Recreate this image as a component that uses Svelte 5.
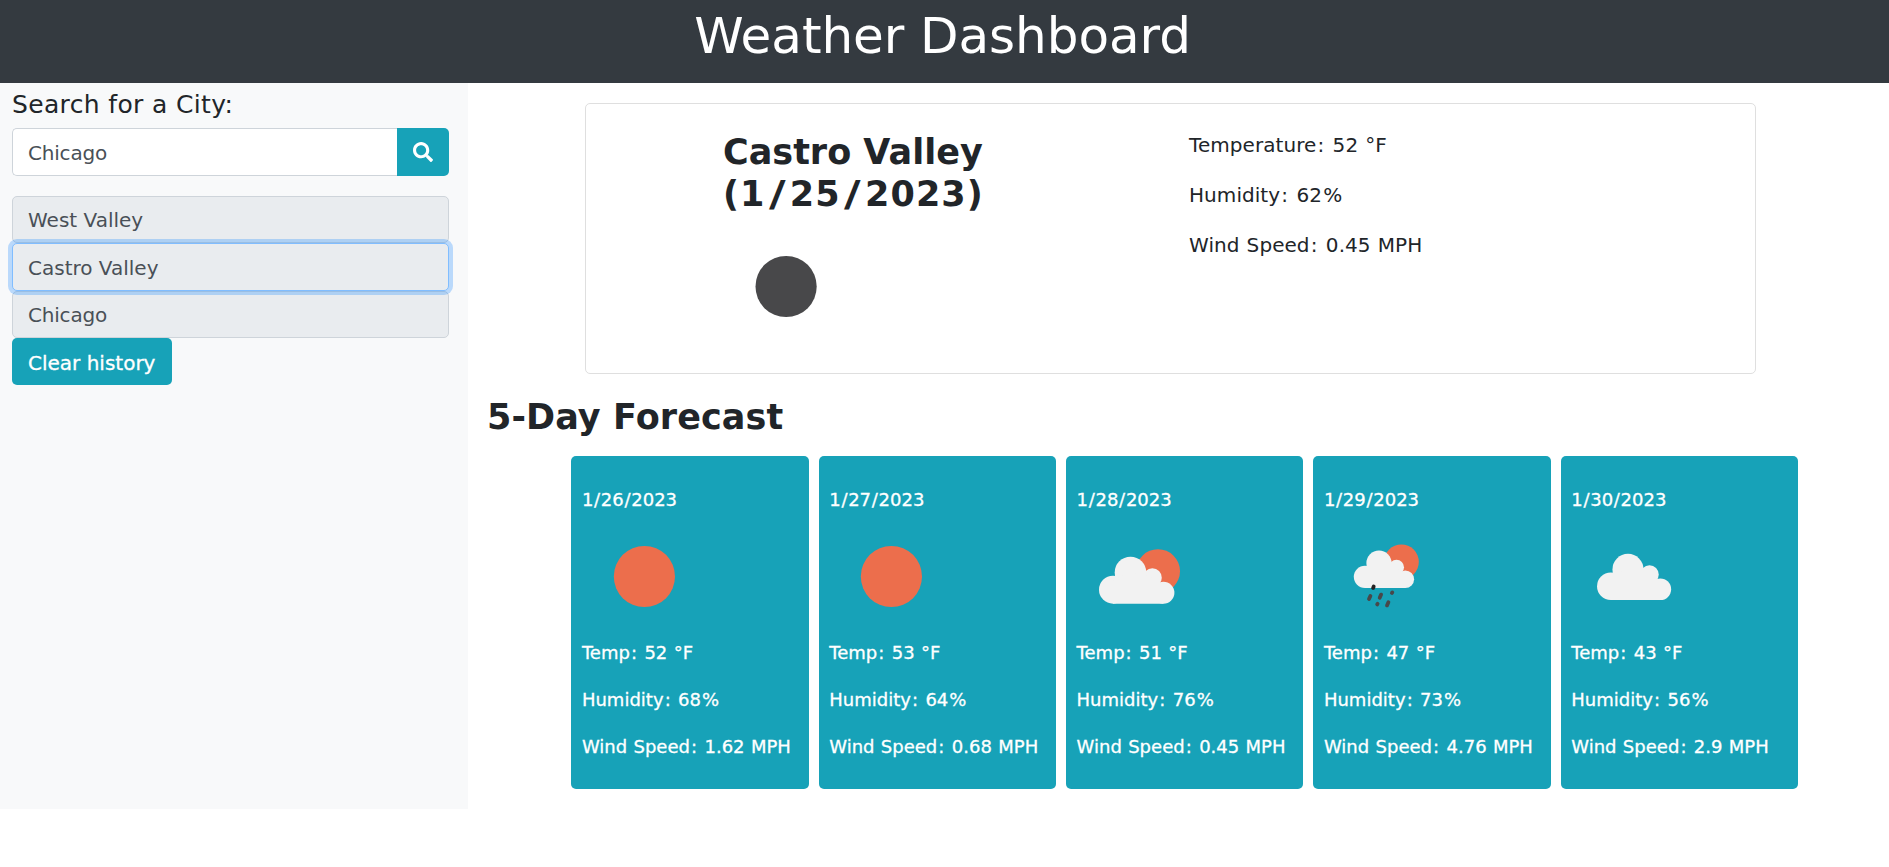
<script>
  const history = ['West Valley', 'Castro Valley', 'Chicago'];
  const selected = 'Castro Valley';
  const forecast = [
    { date: '1/26/2023', icon: 'sun', temp: 52, humidity: 68, wind: '1.62' },
    { date: '1/27/2023', icon: 'sun', temp: 53, humidity: 64, wind: '0.68' },
    { date: '1/28/2023', icon: 'partly', temp: 51, humidity: 76, wind: '0.45' },
    { date: '1/29/2023', icon: 'rain', temp: 47, humidity: 73, wind: '4.76' },
    { date: '1/30/2023', icon: 'cloud', temp: 43, humidity: 56, wind: '2.9' }
  ];
  let city = $state('Chicago');
</script>

{#snippet cloud()}
  <g fill="#f2f2f2" transform="translate(.3 .2)">
    <circle cx="35.7" cy="75.5" r="14" />
    <circle cx="53.2" cy="58.3" r="15.8" />
    <circle cx="75.1" cy="63.5" r="9.4" />
    <circle cx="86.1" cy="78.5" r="11" />
    <path d="M35.7 89.5V66L53 58L75 63L86.1 74V89.5Z" />
  </g>
{/snippet}

{#snippet dated(value)}{#each value.split('/') as part, i}{#if i > 0}<span class="slash">/</span>{/if}{part}{/each}{/snippet}

{#snippet reading(label, value, unit)}
  <p>{label}<span class="colon">:</span> {value}{#if unit === '%'}<span class="percent">%</span>{:else}{' ' + unit}{/if}</p>
{/snippet}

<header><h1>Weather Dashboard</h1></header>
<div class="layout">
  <aside>
    <h5>Search for a City:</h5>
    <div class="search">
      <input type="text" bind:value={city} aria-label="City" />
      <button class="go" aria-label="Search">
        <svg width="20" height="20" viewBox="0 0 512 512"><path fill="#fff" d="M505 442.7L405.3 343c-4.5-4.5-10.6-7-17-7H372c27.6-35.3 44-79.7 44-128C416 93.1 322.9 0 208 0S0 93.1 0 208s93.1 208 208 208c48.3 0 92.7-16.4 128-44v16.3c0 6.4 2.5 12.5 7 17l99.7 99.7c9.4 9.4 24.6 9.4 33.9 0l28.3-28.3c9.4-9.4 9.4-24.6.1-34zM208 336c-70.7 0-128-57.2-128-128 0-70.7 57.2-128 128-128 70.7 0 128 57.2 128 128 0 70.7-57.2 128-128 128z" /></svg>
      </button>
    </div>
    <div class="history">
      {#each history as name}
        <div class="item" class:short={name === 'Chicago'} class:focused={name === selected}>{name}</div>
      {/each}
    </div>
    <button class="clear">Clear history</button>
  </aside>

  <main>
    <section class="current">
      <div class="place">
        <h3>Castro Valley<br /><span class="day">({@render dated('1/25/2023')})</span></h3>
        <svg width="125" height="125" viewBox="0 0 125 125"><circle cx="63.1" cy="62.5" r="30.6" fill="#48484a" /></svg>
      </div>
      <div class="stats">
        {@render reading('Temperature', 52, '°F')}
        {@render reading('Humidity', 62, '%')}
        {@render reading('Wind Speed', '0.45', 'MPH')}
      </div>
    </section>

    <h3 class="heading">5-Day Forecast</h3>
    <section class="cards">
      {#each forecast as day}
        <article>
          <p class="date">{@render dated(day.date)}</p>
          <svg width="125" height="125" viewBox="0 0 125 125">
            {#if day.icon === 'sun'}
              <circle cx="62.4" cy="62.5" r="30.6" fill="#ec6e4c" />
            {:else if day.icon === 'partly'}
              <circle cx="81" cy="57.2" r="22" fill="#ec6e4c" />
              {@render cloud()}
            {:else if day.icon === 'rain'}
              <circle cx="77.4" cy="47.9" r="17.4" fill="#ec6e4c" />
              <g transform="translate(12.2 2.3) scale(.8)">{@render cloud()}</g>
              <g stroke="#48484a" stroke-width="3.8" stroke-linecap="round">
                <path stroke="#222" d="M49.1 73.9L49.7 72.5" />
                <path d="M45 85.1L46.4 81.9" />
                <path d="M55.7 83.8L57.1 80.6" />
                <path d="M67.9 79L68.3 78.4" />
                <path d="M53.2 90.4L53.6 89.8" />
                <path d="M63 91.4L64.4 88.2" />
              </g>
            {:else}
              <g transform="translate(4.4 -2.1) scale(.983)">{@render cloud()}</g>
            {/if}
          </svg>
          {@render reading('Temp', day.temp, '°F')}
          {@render reading('Humidity', day.humidity, '%')}
          {@render reading('Wind Speed', day.wind, 'MPH')}
        </article>
      {/each}
    </section>
  </main>
</div>

<style>
  :global(body) {
    background: #fff;
    color: #212529;
    font: 20px/1.5 'DejaVu Sans', Verdana, sans-serif;
  }
  * { box-sizing: border-box; }
  h1, h3, h5, p { margin: 0; }
  svg { display: block; }
  header {
    height: 83px;
    padding: 6px 4px 0 0;
    background: #343a40;
    color: #fff;
    text-align: center;
  }
  h1 { font-size: 50px; line-height: 60px; font-weight: 400; letter-spacing: -0.06px; }
  .layout { display: flex; }
  aside {
    width: 468px;
    height: 726px;
    padding: 7px 19px 0 12px;
    background: #f8f9fa;
  }
  h5 {
    font-size: 25px;
    line-height: 30px;
    font-weight: 400;
    letter-spacing: 0.35px;
    margin-bottom: 8px;
  }
  input, button { font: inherit; }
  .search { display: flex; height: 48px; margin-bottom: 20px; }
  input {
    flex: 1;
    min-width: 0;
    padding: 8px 15px 6px;
    border: 1px solid #ced4da;
    border-right: 0;
    border-radius: 5px 0 0 5px;
    background: #fff;
    color: #495057;
    letter-spacing: -0.2px;
    outline: 0;
  }
  .go {
    width: 52px;
    padding: 0;
    display: grid;
    place-items: center;
    border: 0;
    border-radius: 0 5px 5px 0;
    background: #17a2b8;
  }
  .item {
    height: 47.33px;
    padding: 8px 15px 0;
    border: 1px solid #ced4da;
    border-radius: 5px;
    background: #e9ecef;
    color: #495057;
  }
  .short { letter-spacing: -0.2px; }
  .focused {
    position: relative;
    padding-top: 9px;
    border-color: #80bdff;
    box-shadow: 0 0 0 4px rgba(0, 123, 255, 0.25);
  }
  .clear {
    display: block;
    width: 160px;
    height: 47px;
    padding: 4px 0 0 16px;
    border: 0;
    border-radius: 5px;
    background: #17a2b8;
    color: #fff;
    text-align: left;
    -webkit-text-stroke: 0.3px #fff;
  }
  main { flex: 1; padding: 20px 91px 0 19px; }
  .current {
    display: flex;
    width: 1171px;
    height: 271px;
    margin-left: 98px;
    padding: 26px 0 0 137px;
    border: 1px solid #dfdfdf;
    border-radius: 5px;
  }
  .place { width: 466px; padding-top: 1px; }
  h3 { font-size: 35px; line-height: 42px; font-weight: 700; white-space: nowrap; }
  .place svg { margin-top: 9px; }
  .day { letter-spacing: 1.1px; }
  .slash { padding: 0 0.7px; }
  .day .slash {
    display: inline-block;
    padding: 0 5.2px;
    transform: scaleX(1.3);
  }
  .colon, .percent { padding: 0 0.058em; }
  .stats p { margin-bottom: 20px; letter-spacing: 0.06px; word-spacing: 0.7px; }
  .heading { margin: 22px 0 18px; letter-spacing: 0.1px; }
  .cards {
    display: grid;
    grid-template-columns: repeat(5, 1fr);
    gap: 10px;
    margin-left: 84.3px;
  }
  article {
    height: 333px;
    padding: 30px 0 0 10.6px;
    border-radius: 5px;
    background: #17a2b8;
    color: #fff;
    font-size: 18px;
    line-height: 27px;
    white-space: nowrap;
    letter-spacing: 0.01px;
    word-spacing: 0.6px;
    -webkit-text-stroke: 0.3px #fff;
  }
  article p { margin-bottom: 20px; }
  article .date { margin-bottom: 0.5px; }
</style>
